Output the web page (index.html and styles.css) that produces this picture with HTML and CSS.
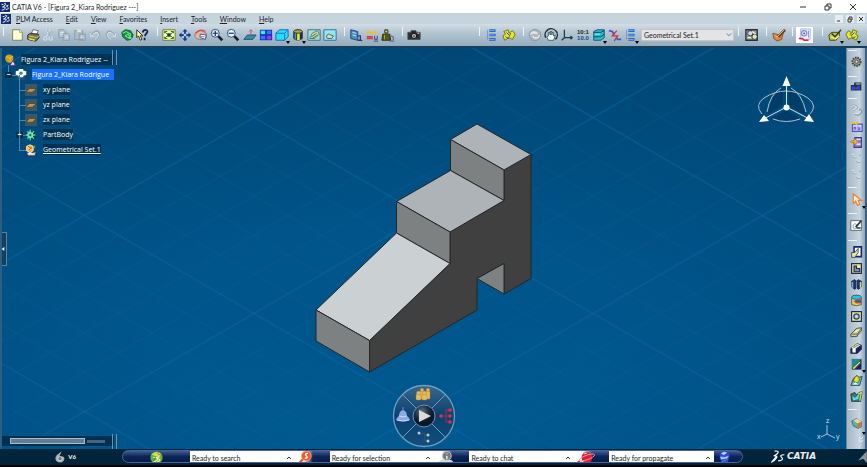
FILE: index.html
```html
<!DOCTYPE html>
<html lang="en">
<head>
<meta charset="utf-8">
<title>CATIA V6 - [Figura 2_Kiara Rodriguez ---]</title>
<link rel="stylesheet" href="styles.css">
</head>
<body>
<svg class="defs" aria-hidden="true">
  <symbol id="logo" viewBox="0 0 12 12"><path fill="#142f72" d="M0 0h12v12H0z"/><path d="M5 2q3-1 1 2L3 6h3q1 1-1 3L2 10M10 4q-4 0-1 2t-2 3M2 3h2" fill="none" stroke="#e8f0ff" stroke-width="1.2"/></symbol>
  <symbol id="page" viewBox="0 0 16 16"><path d="M3 2h8l3 3v9H3z" fill="#ffffd2" stroke="#77775a"/><path d="M11 2v3h3" fill="#fff" stroke="#99997a"/></symbol>
  <symbol id="printer" viewBox="0 0 16 16"><path d="M6 7l2-5 6 1-2 5z" fill="#fff" stroke="#333" stroke-width=".7"/><path d="M2 8l3-2 9 1 1 4-4 4-9-2z" fill="#77754a" stroke="#222"/><path d="M3 9l9 2 3-2" stroke="#ddda9a" fill="none"/><path d="M3 12l7 2" stroke="#f3e72b" stroke-width="1.5"/></symbol>
  <symbol id="cut" viewBox="0 0 16 16"><g fill="none" stroke="#d5dde3" stroke-width="1.4"><path d="M6 2l4 9M11 2L6 11"/><circle cx="5" cy="12" r="2"/><circle cx="11" cy="12" r="2"/></g><path d="M7 2l4 9M12 3l-5 8" stroke="#899aa6" fill="none" stroke-width=".7"/></symbol>
  <symbol id="copy" viewBox="0 0 16 16"><path d="M2 2h6l2 2v7H2z M7 6h5l2 2v6H7z" fill="#b5c5d0" stroke="#899aa6"/><path d="M4 5h4M4 7h3M9 9h3M9 11h4" stroke="#e8eff3"/></symbol>
  <symbol id="paste" viewBox="0 0 16 16"><path d="M2 3h9v10H2z M7 7h7v7H7z" fill="#b0bfc9" stroke="#8797a3"/><path d="M5 2h4v2H5zM9 9h3M9 11h3" fill="#ddd" stroke="#e2e8ec"/></symbol>
  <symbol id="undo" viewBox="0 0 16 16"><path d="M3 9q8-10 10-2 0 4-5 6M3 5v5h5" fill="none" stroke="#94a7b5" stroke-width="1.6"/><path d="M3 10q8-9 9-2 0 3-4 5M3 6v4h5" fill="none" stroke="#e3eaee"/></symbol>
  <symbol id="swirl" viewBox="0 0 16 16"><path d="M2 5l4-3 6 1 3 5-2 5-5 1-5-4z" fill="#138b43" stroke="#075b2b"/><path d="M3 6l4-2 5 3-1 5-5-3 3-2 4 5M10 10l4 4" fill="none" stroke="#7be48a" stroke-width="1.2"/></symbol>
  <symbol id="help" viewBox="0 0 16 16"><path d="M2 2v9l2-2 2 5 2-1-2-4h3z" fill="#fff68c" stroke="#222"/><path d="M9 5q0-3 3-3 3 1 2 3l-3 4M11 11v3" fill="none" stroke="#16214d" stroke-width="2"/></symbol>
  <symbol id="fit" viewBox="0 0 16 16"><path d="M1 2h14v12H1z" fill="#ffff98" stroke="#626f33"/><path d="M3 4l3 3M3 4h3M3 4v2M13 4l-3 3M13 4h-3M13 4v2M3 12l3-3M3 12h3M3 12v-2M13 12l-3-3M13 12h-3M13 12v-2" stroke="#05653a"/><path d="M6 6h4v4H6z" fill="#103c63"/></symbol>
  <symbol id="pan" viewBox="0 0 16 16"><path d="M8 1l3 3H9v3h3V5l3 3-3 3V9H9v3h2l-3 3-3-3h2V9H4v2L1 8l3-3v2h3V4H5z" fill="#123c8e"/><circle cx="8" cy="8" r="1.5" fill="#b9d4ee"/></symbol>
  <symbol id="rotate" viewBox="0 0 16 16"><path d="M1 8q1-5 7-5l6 3v5q-3 4-8 2-5-1-5-5z" fill="#eab7a6" stroke="#9b5a5d" stroke-width=".8"/><path d="M7 7l7 1-1 5-6-2z" fill="#fff" stroke="#2a4d8c"/><path d="M8 10h4" stroke="#3977c2"/><path d="M2 6q5-6 11-2" fill="none" stroke="#d4453f" stroke-width="1.5"/></symbol>
  <symbol id="zoomin" viewBox="0 0 16 16"><path d="M9 9l5 5" stroke="#171f35" stroke-width="3"/><circle cx="6" cy="6" r="4.5" fill="#d8faff" stroke="#283c65"/><path d="M3 6h6M6 3v6" stroke="#171f5b" stroke-width="1.3"/></symbol>
  <symbol id="zoomout" viewBox="0 0 16 16"><path d="M9 9l5 5" stroke="#171f35" stroke-width="3"/><circle cx="6" cy="6" r="4.5" fill="#d8faff" stroke="#283c65"/><path d="M3 6h6" stroke="#171f5b" stroke-width="1.3"/></symbol>
  <symbol id="normal" viewBox="0 0 16 16"><path d="M1 13l4-5h10l-4 5z" fill="#338fae" stroke="#144e6d"/><path d="M9 10V2M7 4l2-2 2 2" fill="none" stroke="#be4d5d"/></symbol>
  <symbol id="multi" viewBox="0 0 16 16"><path d="M1 2h14v12H1z" fill="#1431c7"/><path d="M2 3h5v4H2z" fill="#2cf2ef"/><path d="M9 3h5v4H9z" fill="#3676f3"/><path d="M2 9h5v4H2z" fill="#3775eb"/><path d="M9 9h5v4H9z" fill="#9a38da"/></symbol>
  <symbol id="cube" viewBox="0 0 16 16"><path d="M1 6l4-4h10v8l-4 4H1z" fill="#25dfff" stroke="#195cbb"/><path d="M1 6h10l4-4M11 6v8" fill="none" stroke="#1869d2"/></symbol>
  <symbol id="cylinder" viewBox="0 0 16 16"><path d="M3 4q5-4 10 0v8q-5 4-10 0z" fill="#172d52" stroke="#283f60"/><path d="M7 5h3v9H7z" fill="#f4e91c"/><ellipse cx="8" cy="4" rx="5" ry="2" fill="#a9ad3b" stroke="#333"/><path d="M4 6h2v7H4z" fill="#3f9999"/></symbol>
  <symbol id="hide" viewBox="0 0 16 16"><path d="M1 2h14v12H1z" fill="#a5ddd7" stroke="#3c6880"/><path d="M3 12l3-6 6-3 2 4-5 5z" fill="#d5df8f" stroke="#40757c"/><path d="M5 10l6-4M6 12l6-4" stroke="#1c6b78"/></symbol>
  <symbol id="swap" viewBox="0 0 16 16"><path d="M1 2h14v12H1z" fill="#8ee9f6" stroke="#3b6380"/><path d="M4 10q1-5 5-2l3 1-2 3H5z" fill="#e8d3b0" stroke="#296281"/></symbol>
  <symbol id="catalog" viewBox="0 0 16 16"><path d="M2 2l8 2v10l-8-2z" fill="#4692bc" stroke="#203c72"/><path d="M4 5l4 1M4 8l4 1" stroke="#b3f2ff"/><path d="M10 9h3v4l2 2M10 14h4" stroke="#3e3178" stroke-width="1.5" fill="none"/></symbol>
  <symbol id="measure" viewBox="0 0 16 16"><path d="M1 5l3-3v2h7V2l3 3-3 3V6H4v2z" fill="#f0bf24"/><path d="M2 10h7M2 12h7" stroke="#d93545" stroke-width="1.5"/><path d="M11 9v4h3V9M10 15h5" stroke="#432e78" fill="none"/></symbol>
  <symbol id="weight" viewBox="0 0 16 16"><circle cx="6" cy="4" r="2" fill="none" stroke="#55521f" stroke-width="1.5"/><path d="M2 7h8l1 7H1z" fill="#595719" stroke="#27270e"/><path d="M4 8v5" stroke="#b0a85a"/><path d="M11 9l3 1v4M10 15h5" stroke="#514782" fill="none"/></symbol>
  <symbol id="camera" viewBox="0 0 16 16"><path d="M1 5h3l1-2h5l1 2h4v8H1z" fill="#2b2d30" stroke="#4b4b48"/><circle cx="8" cy="9" r="3" fill="#b1b8b8" stroke="#000"/><circle cx="8" cy="9" r="1" fill="#444"/><path d="M12 6h2" stroke="#fff"/></symbol>
  <symbol id="stack" viewBox="0 0 16 16"><path d="M5 3h7M5 8h7M5 13h7" stroke="#3252c4" stroke-width="3"/><path d="M5 3h6M5 8h6M5 13h6" stroke="#56d9ee" stroke-width="1"/><path d="M3 2v11" stroke="#5a72a8" stroke-width=".7"/></symbol>
  <symbol id="clash" viewBox="0 0 16 16"><path d="M2 4l5-2 1 4 4-3 3 4-3 6-4-2-5 3-2-5 3-2z" fill="#ece623" stroke="#696c0d"/><path d="M5 5l3 3M10 6l-2 4M4 10l4 2" stroke="#253fce" stroke-width="1"/></symbol>
  <symbol id="refresh" viewBox="0 0 16 16"><circle cx="8" cy="8" r="6.5" fill="#adb7bd" stroke="#89949b"/><path d="M3 8q1-5 6-3l2 2M13 8q-1 5-6 3L5 9M5 6h5M6 11h5" fill="none" stroke="#e2e6e8" stroke-width="1.6"/></symbol>
  <symbol id="hand" viewBox="0 0 16 16"><path d="M2 11A7 7 0 1 1 13 13" fill="none" stroke="#232c32" stroke-width="1.6"/><path d="M5 14L3 10l2-1V5h2v3-4h2v4-3h2v4l2-1-2 6z" fill="#fff" stroke="#255e65"/></symbol>
  <symbol id="axis" viewBox="0 0 16 16"><path d="M5 2v9l-3 3M5 11h9M12 9l2 2-2 2" fill="none" stroke="#233443" stroke-width="1.4"/></symbol>
  <symbol id="body" viewBox="0 0 16 16"><path d="M2 4l4-2h8v9l-4 3H2z" fill="#25bfc4" stroke="#174a7a"/><path d="M2 5h8l4-2M2 10h8l4-3" fill="none" stroke="#073a66"/><path d="M3 7h6" stroke="#94fff1"/></symbol>
  <symbol id="connect" viewBox="0 0 16 16"><path d="M1 3l4 1 2 4M9 11l2 2h4" fill="none" stroke="#355bd1" stroke-width="2"/><path d="M10 3L5 9h6L7 15" fill="none" stroke="#d82e3e" stroke-width="1.5"/></symbol>
  <symbol id="find" viewBox="0 0 16 16"><path d="M1 2h13v12H1z" fill="#a3a07a" stroke="#242f4b" stroke-width="1.5"/><circle cx="6" cy="6" r="3" fill="#d1dbe3" stroke="#333"/><circle cx="11" cy="10" r="3" fill="#e8e4b2" stroke="#293247"/><path d="M3 11h4M8 4l4 3" stroke="#eee" stroke-width="1.5"/></symbol>
  <symbol id="brush" viewBox="0 0 16 16"><path d="M1 6l7 2 5-3-2 8-5 2-4-3z" fill="#d98543" stroke="#8a4a20"/><path d="M7 10l8-8" stroke="#6a3f23" stroke-width="3"/><path d="M6 10l8-8M3 8l4 3" stroke="#f9c488"/></symbol>
  <symbol id="gearpage" viewBox="0 0 16 16"><path d="M3 1h11v12H3z" fill="#e7ecff" stroke="#a7b1dd"/><circle cx="7" cy="6" r="3" fill="none" stroke="#7f8fc9" stroke-width="1.500"/><circle cx="7" cy="6" r="1" fill="#333c89"/><path d="M12 3v8" stroke="#7c8de0"/><path d="M1 12h4l2 2h5" fill="none" stroke="#dc2323" stroke-width="1.500"/></symbol>
  <symbol id="checkbox3d" viewBox="0 0 16 16"><path d="M1 8l3-3h9v5l-4 4H2z" fill="#c4c83a" stroke="#393d1b"/><path d="M3 10l6 2 4-3" fill="none" stroke="#f4f08f" stroke-width="1.5"/><path d="M4 6l4 4 7-8" fill="none" stroke="#2d3a26" stroke-width="1.5"/></symbol>
  <symbol id="pad" viewBox="0 0 16 16"><path d="M5 1h9v12H5z" fill="#fff" stroke="#172767" stroke-width="2"/><path d="M2 8h4l4-5v5l-4 6H2z" fill="#e9e69c" stroke="#303458"/></symbol>
  <symbol id="pocket" viewBox="0 0 16 16"><path d="M2 2h12v12H2z" fill="#eeeb91" stroke="#242a53" stroke-width="1.5"/><path d="M5 5h3v3h4v4H5z" fill="#7b93ad" stroke="#242a53" stroke-width="1.4"/></symbol>
  <symbol id="shaft" viewBox="0 0 16 16"><path d="M2 4l4-2 2 2 2-2 4 2v7l-4 3-2-3-2 3-4-3z" fill="#20326d" stroke="#192344"/><path d="M3 5v7" stroke="#7fb8b0" stroke-width="2"/><path d="M13 5v7" stroke="#e0dd74" stroke-width="2"/><path d="M8 4v9" stroke="#719aba"/></symbol>
  <symbol id="groove" viewBox="0 0 16 16"><path d="M2 4q6-5 12 0v9q-6 3-12 0z" fill="#eec849" stroke="#3b5668"/><ellipse cx="8" cy="4" rx="6" ry="2.5" fill="#28c4de" stroke="#326374"/><path d="M14 7H8q-5 2 0 4h6z" fill="#2868a2" stroke="#db4a31" stroke-width="1.2"/></symbol>
  <symbol id="hole" viewBox="0 0 16 16"><path d="M2 2h12v12H2z" fill="#f1ee91" stroke="#202753" stroke-width="1.4"/><circle cx="8" cy="8" r="3.3" fill="#adc5df" stroke="#313f77" stroke-width="1.5"/><path d="M7 8h2" stroke="#fff"/></symbol>
  <symbol id="rib" viewBox="0 0 16 16"><path d="M1 10l7-7 6-1v4l-6 7H1z" fill="#cccb91" stroke="#3a3e3e"/><path d="M2 10h7l5-7M9 10v3" fill="none" stroke="#555"/><path d="M5 8l5-4h2L7 8z" fill="#ffffa9"/></symbol>
  <symbol id="slot" viewBox="0 0 16 16"><path d="M1 8l8-6 5 2v5l-5 5H1z" fill="#18236c" stroke="#20263c"/><path d="M2 7l7-5 4 2-6 4v5H3V8z" fill="#fff"/><path d="M4 7l7-4" stroke="#a9aa56" stroke-width="2"/></symbol>
  <symbol id="stiff" viewBox="0 0 16 16"><path d="M2 1h12v13H2z" fill="#20898b"/><path d="M14 1v13H5z" fill="#16236a"/><path d="M3 12L13 3v3l-8 8H3z" fill="#e6e57b" stroke="#333"/></symbol>
  <symbol id="loft" viewBox="0 0 16 16"><path d="M1 14l3-8 4-4 3 2 4-1-3 11z" fill="#52b9c6" stroke="#273947"/><path d="M4 9q3-10 7-5 2 3-2 7z" fill="#e6e329" stroke="#555a15"/><path d="M3 13l4-3 3 3" fill="#fff"/></symbol>
  <symbol id="removed" viewBox="0 0 16 16"><path d="M1 5l5-2 2 3 3-3 4-1-2 12H2z" fill="#367876" stroke="#263338"/><path d="M3 7q3 5 6 0l3-3-2 7-6 2z" fill="#5fe2e2"/><path d="M10 5l4-2-2 10" fill="none" stroke="#dddf48" stroke-width="1.5"/></symbol>
  <symbol id="fillet" viewBox="0 0 16 16"><path d="M2 5l6-3 6 4v6l-4 2-6-3z" fill="#49b9a8" stroke="#5c5655"/><path d="M4 4l5-2 5 4-5 2z" fill="#ecd39b"/><path d="M9 8l5-2v6l-4 2z" fill="#cf7649"/></symbol>
  <symbol id="sketch" viewBox="0 0 16 16"><path d="M1 2h13v12H1z" fill="#fff" stroke="#46555d"/><path d="M4 11q-1-6 3-5 4 3-1 6z" fill="none" stroke="#46a68b"/><path d="M7 10l7-8M8 11h5" stroke="#29363c" stroke-width="2"/></symbol>
  <symbol id="pointer" viewBox="0 0 16 16"><path d="M4 1v12l3-3 2 5 3-1-2-5h4z" fill="#fff1df" stroke="#f5822b" stroke-width="1.5"/></symbol>
  <symbol id="gear" viewBox="0 0 16 16"><path d="M1 15l13-7v5z" fill="#9ad0b0"/><circle cx="8" cy="7" r="5" fill="#a0a39c" stroke="#40443e" stroke-width="2.5" stroke-dasharray="2 1"/><circle cx="8" cy="7" r="2" fill="#dee0d6" stroke="#333"/></symbol>
  <symbol id="machine" viewBox="0 0 16 16"><path d="M1 6h4V3h9v10H1z" fill="#272d40"/><path d="M2 8h4v4H2zM9 7h3v5H9z" fill="#2c4bf3"/><path d="M7 5h6M7 10h1" stroke="#d0d4d9" stroke-width="1.3"/></symbol>
  <symbol id="chain" viewBox="0 0 16 16"><path d="M2 3q4-2 6 1L4 7M6 12q6 3 8-3l-2-3" stroke="#8da0ad" stroke-width="3" fill="none"/><path d="M2 3q4-2 6 1L4 7M6 11q6 3 7-3" stroke="#e6ecef" fill="none" stroke-width="1.4"/></symbol>
  <symbol id="label" viewBox="0 0 16 16"><path d="M3 5h12v9H3z" fill="#ccd2ff" stroke="#4d50c8" stroke-width="1.4"/><path d="M1 3h6V1l4 3-4 3V5H1z" fill="#f4ba20"/><path d="M5 12V9h2v3M10 8v4h2V9" fill="none" stroke="#383caa"/></symbol>
  <symbol id="save" viewBox="0 0 16 16"><path d="M6 2h8v12H5V7z" fill="#8d84db" stroke="#363d91" stroke-width="1.4"/><path d="M8 4h5M8 10h5" stroke="#fff" stroke-width="1.5"/><path d="M1 6h4V3l5 4-5 4V8H1z" fill="#f4ba20" stroke="#c3622b" stroke-width=".7"/></symbol>
  <symbol id="ghost" viewBox="0 0 16 16"><path d="M2 4h3v3h3M8 11q2 3 5 1M12 3v2" fill="none" stroke="#94a8b5" stroke-width="1.500"/><path d="M2 3h3v3h3M8 10q2 3 5 1" fill="none" stroke="#e8eef1"/></symbol>
  <symbol id="product" viewBox="0 0 16 16"><circle cx="7" cy="6" r="5.5" fill="#cf9d18"/><path d="M3 3l5 2 4-2M8 5v6" stroke="#e7c747" fill="none"/><path d="M8 15l4-6 3 6z" fill="#f6f5ff" stroke="#68388b" stroke-width="1.2"/></symbol>
  <symbol id="part" viewBox="0 0 16 16"><path d="M2 9h12v6H2z" fill="#174e7a"/><path d="M1 3l4-1V0h6v2l4 1v5l-4 1v2H5V9L1 8z" fill="#fff"/><circle cx="8" cy="5.500" r="2.200" fill="#2686a6"/></symbol>
  <symbol id="plane" viewBox="0 0 16 16"><path d="M0 0h16v16H0z" fill="#3c5866"/><path d="M1 11l5-5h9l-5 5z" fill="#c0954a" stroke="#4d3f25"/></symbol>
  <symbol id="cog" viewBox="0 0 16 16"><circle cx="9" cy="9" r="6" fill="#063a57"/><path d="M7 1v14M1 8h13M3 3l9 10M12 3L3 13" stroke="#38d9a0" stroke-width="2"/><circle cx="7" cy="8" r="3.5" fill="#53d8b9" stroke="#b8ef8e"/><circle cx="7" cy="8" r="1.3" fill="#07566b"/></symbol>
  <symbol id="geoset" viewBox="0 0 16 16"><path d="M2 3q5-4 9 0v6q-4 4-9 0z" fill="#f5c454" stroke="#fff0ac"/><path d="M4 3l5 2-4 3" fill="none" stroke="#d04727" stroke-width="1.2"/><path d="M3 12l4-2 3 2 4-1-1 4H4z" fill="#eee" stroke="#b63d2b" stroke-width=".6"/><path d="M13 2v4" stroke="#6db5c9"/></symbol>
</svg>

<header class="titlebar">
  <svg class="mark"><use href="#logo"/></svg>
  <h1>CATIA V6 - [Figura 2_Kiara Rodriguez ---]</h1>
  <div class="window-controls">
    <button aria-label="Minimize"><svg viewBox="0 0 8 8"><path d="M1 4h6"/></svg></button>
    <button aria-label="Restore"><svg viewBox="0 0 8 8"><path d="M1 3h4v4H1zM3 3V1h4v4H5"/></svg></button>
    <button aria-label="Close"><svg viewBox="0 0 8 8"><path d="M1 1l6 6M7 1L1 7"/></svg></button>
  </div>
</header>
<nav class="menubar" aria-label="Main menu">
  <svg class="mark"><use href="#logo"/></svg>
  <button><u>P</u>LM Access</button><button><u>E</u>dit</button><button><u>V</u>iew</button><button><u>F</u>avorites</button><button><u>I</u>nsert</button><button><u>T</u>ools</button><button><u>W</u>indow</button><button><u>H</u>elp</button>
  <div class="doc-controls">
    <button aria-label="Minimize document"><svg viewBox="0 0 8 8"><path d="M2 6h3"/></svg></button>
    <button aria-label="Restore document"><svg viewBox="0 0 8 8"><path d="M2 4h3v3H2zM3 4V2h3v3H5"/></svg></button>
    <button aria-label="Close document"><svg viewBox="0 0 8 8"><path d="M2 2l4 4M6 2L2 6"/></svg></button>
  </div>
</nav>
<div class="toolbar" role="toolbar" aria-label="Standard tools">
  <div class="group standard">
    <button aria-label="New"><svg><use href="#page"/></svg></button><button aria-label="Print"><svg><use href="#printer"/></svg></button><button aria-label="Cut"><svg><use href="#cut"/></svg></button><button aria-label="Copy"><svg><use href="#copy"/></svg></button><button aria-label="Paste"><svg><use href="#paste"/></svg></button><button aria-label="Undo"><svg><use href="#undo"/></svg></button><button aria-label="Redo"><svg class="flip"><use href="#undo"/></svg></button><button aria-label="Update"><svg><use href="#swirl"/></svg></button><button aria-label="Help pointer"><svg><use href="#help"/></svg></button>
  </div>
  <div class="group">
    <button aria-label="Fit all"><svg><use href="#fit"/></svg></button><button aria-label="Pan"><svg><use href="#pan"/></svg></button><button aria-label="Rotate"><svg><use href="#rotate"/></svg></button><button aria-label="Zoom in"><svg><use href="#zoomin"/></svg></button><button aria-label="Zoom out"><svg><use href="#zoomout"/></svg></button><button aria-label="Normal view"><svg><use href="#normal"/></svg></button><button aria-label="Multi view"><svg><use href="#multi"/></svg></button><button class="more" aria-label="Isometric view"><svg><use href="#cube"/></svg></button><button class="more" aria-label="Shading"><svg><use href="#cylinder"/></svg></button><button aria-label="Hide or show"><svg><use href="#hide"/></svg></button><button aria-label="Swap space"><svg><use href="#swap"/></svg></button>
  </div>
  <div class="group">
    <button aria-label="Catalog"><svg><use href="#catalog"/></svg></button><button aria-label="Measure"><svg><use href="#measure"/></svg></button><button aria-label="Inertia"><svg><use href="#weight"/></svg></button>
  </div>
  <div class="group camera"><button aria-label="Capture"><svg><use href="#camera"/></svg></button></div>
  <div class="group">
    <button aria-label="Structure"><svg><use href="#stack"/></svg></button><button aria-label="Interference"><svg><use href="#clash"/></svg></button>
  </div>
  <div class="group sets">
    <button aria-label="Refresh"><svg><use href="#refresh"/></svg></button><button aria-label="Manual update"><svg><use href="#hand"/></svg></button><button aria-label="Axis system"><svg><use href="#axis"/></svg></button><button class="digits" aria-label="Mean dimensions">10:1<br><b>10.0</b></button><button class="more" aria-label="Insert body"><svg><use href="#body"/></svg></button><button aria-label="Connection"><svg><use href="#connect"/></svg></button><button class="more" aria-label="Sets"><svg><use href="#stack"/></svg></button>
    <div class="combo"><select aria-label="In work object"><option>Geometrical Set.1</option></select><svg viewBox="0 0 8 8" aria-hidden="true"><path d="M1 2l3 3 3-3"/></svg></div>
  </div>
  <div class="group one"><button aria-label="Find"><svg><use href="#find"/></svg></button></div>
  <div class="group one"><button aria-label="Material"><svg><use href="#brush"/></svg></button></div>
  <div class="group one pressed"><button aria-label="Properties"><svg><use href="#gearpage"/></svg></button></div>
  <div class="group"><button class="more" aria-label="Analysis"><svg><use href="#checkbox3d"/></svg></button><button class="more" aria-label="Knowledge"><svg class="flip"><use href="#clash"/></svg></button></div>
</div>

<main class="workspace">
  <section class="viewport" aria-label="Model">
    <svg class="scene" viewBox="0 0 844 402" preserveAspectRatio="xMidYMid slice" role="img" aria-label="Stepped part with a ramp">
      <defs>
        <linearGradient id="sky" x2="0" y2="1"><stop offset="0" stop-color="#004c7c"/><stop offset=".45" stop-color="#005489"/><stop offset="1" stop-color="#005990"/></linearGradient>
        <radialGradient id="edge" cx=".46" cy=".7" r=".66"><stop offset=".4" stop-color="#003c67" stop-opacity="0"/><stop offset="1" stop-color="#003c67" stop-opacity=".3"/></radialGradient>
        <pattern id="minor" x="252" y="70" width="67.8" height="39.2" patternUnits="userSpaceOnUse"><path d="M0 0l67.8 39.2M67.8 0L0 39.2" stroke="#0e649b" stroke-opacity=".35" stroke-width=".8"/></pattern>
        <pattern id="major" x="252" y="70" width="339" height="196" patternUnits="userSpaceOnUse"><path d="M0 0l339 196M339 0L0 196" stroke="#0567a5" stroke-opacity=".7"/></pattern>
      </defs>
      <path fill="url(#sky)" d="M0 0h844v402H0z"/><path fill="url(#edge)" d="M0 0h844v402H0z"/>
      <path fill="url(#minor)" d="M0 0h844v402H0z"/><path fill="url(#major)" d="M0 0h844v402H0z"/>
      <g transform="translate(-2 -48)" stroke="#242626" stroke-linejoin="round" stroke-width="1">
        <path fill="#404040" d="M504 170l27-15v124l-27 15.500V264l-27 15v31.500l-107.500 62V341l80.500-77v-32l54-31z"/>
        <path fill="#7d8182" d="M504 264v30.500L477 279z"/>
        <path fill="#adb3b6" d="M477 124.500l54 30.500-27 15.500-53.500-30.500z"/>
        <path fill="#7d8182" d="M450.500 140l53.500 30.500V201l-53.500-30z"/>
        <path fill="#adb3b6" d="M450.500 171l53.500 30-54 31.500-53.500-30.500z"/>
        <path fill="#7d8182" d="M396.500 202l53.500 30.500V264l-53.500-30.500z"/>
        <path fill="#cbd0d3" d="M396.500 233.500L450 264l-80.500 77L316 310.500z"/>
        <path fill="#7d8182" d="M316 310.500l53.500 30.500v31.500L316 341.500z"/>
      </g>
    </svg>

    <aside class="tree-panel" aria-label="Specification tree">
      <ul class="tree">
        <li class="root"><svg><use href="#product"/></svg><span>Figura 2_Kiara Rodriguez --</span></li>
        <li class="node selected"><i class="toggle">−</i><svg><use href="#part"/></svg><span>Figura 2_Kiara Rodrigue</span></li>
        <li class="leaf"><svg><use href="#plane"/></svg><span>xy plane</span></li>
        <li class="leaf"><svg><use href="#plane"/></svg><span>yz plane</span></li>
        <li class="leaf"><svg><use href="#plane"/></svg><span>zx plane</span></li>
        <li class="leaf"><i class="toggle">+</i><svg><use href="#cog"/></svg><span>PartBody</span></li>
        <li class="leaf last"><svg><use href="#geoset"/></svg><span>Geometrical Set.1</span></li>
      </ul>
      <div class="tree-scroll"><i class="thumb"></i><i class="track"></i></div>
    </aside>
    <button class="drawer" aria-label="Collapse tree"><svg viewBox="0 0 6 10"><path d="M5 2v6L1 5z"/></svg></button>

    <svg class="compass" viewBox="757 75 60 52" role="img" aria-label="Compass">
      <path d="M783 88q-11 5-15 26l15-9zM789 88q12 6 16 27l-16-10zM786 110l-13 8q14 7 27 0z" fill="#003c68"/>
      <g fill="none" stroke="#a9c0cf" stroke-width="1"><path d="M762 114q-8-9 2-16 11-7 22-7t22 7q10 8 2 16M767 112q3-18 14-24M806 112q-4-18-15-24M773 119q13 5 27 0"/></g>
      <path d="M786.500 85v22l-21 11M786.500 107l21 11" fill="none" stroke="#d8e4ec"/>
      <path d="M786.500 76l4 10h-8zM759 122l5-7 5 6zM814 122l-10-1 5-7z" fill="#fff"/><circle cx="786.500" cy="107.500" r="3" fill="#fff"/>
    </svg>

    <svg class="wheel" viewBox="-32 -32 64 64" role="img" aria-label="Robot navigator">
      <defs><radialGradient id="hub" cx=".4" cy=".3"><stop stop-color="#617789"/><stop offset=".6" stop-color="#1f3447"/><stop offset="1" stop-color="#06192c"/></radialGradient><linearGradient id="disc" x2="0" y2="1"><stop stop-color="#386789"/><stop offset=".5" stop-color="#0a4172"/><stop offset="1" stop-color="#124e7d"/></linearGradient></defs>
      <circle r="30.500" fill="url(#disc)" stroke="#6d9dc0" stroke-width="1.300"/>
      <path d="M-22-22L22 22M22-22L-22 22" stroke="#7198b8"/><circle r="11" fill="url(#hub)" stroke="#7392aa"/>
      <path d="M-5-6v12L7 0z" fill="#dcdcd5"/>
      <g fill="#e6bd5e" stroke="#a77c2d" stroke-width=".4"><rect x="-4" y="-25" width="4" height="8" rx="1"/><rect x="2" y="-25" width="4" height="8" rx="1"/><circle cx="-2" cy="-26" r="1.800"/><circle cx="4" cy="-26" r="1.800"/><rect x="-8" y="-22" width="5" height="6" rx="1"/><rect x="-2" y="-22" width="5" height="6" rx="1"/><circle cx="-5.500" cy="-23" r="2"/><circle cx=".5" cy="-23" r="2"/></g>
      <path d="M-28 4q1-3 3-4 0-5 4-6 4 1 4 6 2 1 3 4-7 3-14 0z" fill="#8fa9e4"/><path d="M-25 0q4 2 8 0M-27 4q6 2 12 0" fill="none" stroke="#dce6ff" stroke-width=".8"/><path d="M-21-9v3" stroke="#6b8edb"/>
      <g fill="#d33850" stroke="#c92b43" stroke-width=".8"><path d="M18 0h8M22-6h4M22 6h4M22-6V6" fill="none"/><circle cx="17" r="1.500"/><circle cx="26" cy="-6" r="1.500"/><circle cx="26" r="1.500"/><circle cx="26" cy="6" r="1.500"/></g>
      <path d="M-4 18h5v7h3M1 19h3" fill="none" stroke="#345872"/><g fill="#bdc6c9"><circle cx="-5" cy="17" r="1.500"/><circle cx="4" cy="19" r="1.500"/><circle cx="4" cy="25" r="1.500"/></g>
    </svg>

    <svg class="axes" viewBox="0 0 26 26" role="img" aria-label="Axis directions"><path d="M11 9v9l-6 3M11 18l8 4" fill="none" stroke="#abc0ce"/><text x="10" y="7">z</text><text x="1" y="23">x</text><text x="20" y="23">y</text></svg>
  </section>

  <div class="rail" role="toolbar" aria-label="Part design tools">
    <div class="stack s1"><button aria-label="Workbench"><svg><use href="#gear"/></svg></button></div>
    <div class="stack s1"><button aria-label="Simulation"><svg><use href="#machine"/></svg></button></div>
    <div class="stack s2"><button aria-label="Link"><svg><use href="#chain"/></svg></button><button aria-label="Rename"><svg><use href="#label"/></svg></button><button aria-label="Propagate"><svg><use href="#save"/></svg></button><button aria-label="Compare"><svg><use href="#ghost"/></svg></button><button aria-label="Merge"><svg><use href="#ghost"/></svg></button></div>
    <div class="stack s1"><button class="more" aria-label="Select"><svg><use href="#pointer"/></svg></button></div>
    <div class="stack s1"><button aria-label="Sketch"><svg><use href="#sketch"/></svg></button></div>
    <div class="stack s2"><button aria-label="Pad"><svg><use href="#pad"/></svg></button><button aria-label="Pocket"><svg><use href="#pocket"/></svg></button><button aria-label="Shaft"><svg><use href="#shaft"/></svg></button><button aria-label="Groove"><svg><use href="#groove"/></svg></button><button aria-label="Hole"><svg><use href="#hole"/></svg></button><button aria-label="Rib"><svg><use href="#rib"/></svg></button><button aria-label="Slot"><svg><use href="#slot"/></svg></button><button class="more" aria-label="Stiffener"><svg><use href="#stiff"/></svg></button><button aria-label="Multi-sections solid"><svg><use href="#loft"/></svg></button><button aria-label="Removed solid"><svg><use href="#removed"/></svg></button></div>
    <div class="stack s1"><button class="more" aria-label="Fillet"><svg><use href="#fillet"/></svg></button><button class="overflow" aria-label="More tools"><svg viewBox="0 0 8 8"><path d="M2 1l2 2 2-2M2 4l2 2 2-2"/></svg></button></div>
  </div>
</main>

<footer class="status">
  <div class="version"><svg viewBox="0 0 12 14"><path d="M8 0L2 5q-3 4 0 7 4 3 8 0 3-4-1-6L5 7z" fill="#aab0b0"/><circle cx="6" cy="9" r="2.500" fill="#707778" stroke="#dce0df"/></svg><b>V6</b></div>
  <div class="pill">
    <div class="cap"><svg class="orb" viewBox="0 0 16 16"><circle cx="8" cy="8" r="7.500" fill="#69b52d"/><path d="M2 4q6-5 11 0l-3 4z" fill="#c5e45c"/><path d="M4 8h4q3 3-2 5H4M8 4q5-2 3 2M12 7q-4 1-1 3t-2 3" fill="none" stroke="#fff6ae" stroke-width="1.400"/><path d="M7 7l-3 6" stroke="#2b7abf"/><path d="M9 3l3 2" stroke="#dd5538" stroke-width="1.500"/></svg></div>
    <button class="field">Ready to search<svg viewBox="0 0 8 8"><path d="M2 5l2-2 2 2"/></svg></button>
    <div class="seg"><svg class="orb" viewBox="0 0 16 16"><path d="M7 8l-6 6" stroke="#e95923" stroke-width="3"/><circle cx="9" cy="6" r="6" fill="#ee5c2d" stroke="#ffa477"/><path d="M11 3q-5 0-2 3t-2 3" fill="none" stroke="#fff" stroke-width="1.500"/></svg></div>
    <button class="field">Ready for selection<svg viewBox="0 0 8 8"><path d="M2 5l2-2 2 2"/></svg></button>
    <div class="seg"><svg class="orb wide" viewBox="0 0 18 16"><path d="M0 13q6-4 9-2 8-1 9 3-9 3-18-1z" fill="#d6d9da"/><circle cx="10" cy="6" r="5.500" fill="#777e82" stroke="#cbd0d1"/><path d="M10 3v1M10 6v4" stroke="#fff" stroke-width="1.500"/></svg></div>
    <button class="field">Ready to chat<svg viewBox="0 0 8 8"><path d="M2 5l2-2 2 2"/></svg></button>
    <div class="seg"><svg class="orb wide" viewBox="0 0 20 14"><circle cx="11" cy="7" r="6" fill="#e21e36"/><ellipse cx="11" cy="7" rx="9" ry="2.500" transform="rotate(-20 11 7)" fill="none" stroke="#f09aa2" stroke-width="1"/><circle cx="2" cy="12" r="1.500" fill="#e21e36"/><path d="M8 3l3-1" stroke="#fff"/></svg></div>
    <button class="field">Ready for propagate<svg viewBox="0 0 8 8"><path d="M2 5l2-2 2 2"/></svg></button>
    <div class="end"><svg class="orb" viewBox="0 0 16 16"><path d="M2 2q6-4 11 0l1 5-2 7q-5 3-8 0L2 8z" fill="#2649d8"/><path d="M4 3q4-3 7-1l-4 3zM3 7q5 2 10-1l-2 3-7 1zM5 13l7-3" fill="#cddcff" stroke="#8fb0ff" stroke-width=".6"/></svg></div>
  </div>
  <div class="brand"><svg viewBox="0 0 18 14"><path d="M4 1q6-1 3 3L4 6M3 6q5 0 3 3-2 3-5 4l5-6M15 5q-6 0-3 3t-4 4" fill="none" stroke="#fff" stroke-width="1.300"/></svg><strong>CATIA</strong><svg class="corner" viewBox="0 0 10 14"><path d="M10 0v14L6 9 0 11z" fill="#8b9498"/></svg></div>
</footer>
</body>
</html>
```
FILE: styles.css
```css
* { box-sizing: border-box; }
html, body { height: 100%; }
body {
  margin: 0;
  display: flex;
  flex-direction: column;
  overflow: hidden;
  background: #00253a;
  color: #20242a;
  font: 7px/10px Lato, "Open Sans", sans-serif;
}
button {
  margin: 0;
  padding: 0;
  border: 0;
  background: none;
  color: inherit;
  font: inherit;
}
svg { display: block; flex: none; }
.defs { position: absolute; width: 0; height: 0; }

.titlebar, .menubar { display: flex; align-items: center; flex: none; }
.titlebar { height: 13px; background: #fff; }
.titlebar h1 { margin: 0 0 0 2px; font: inherit; }
.mark { width: 10px; height: 10px; }
.window-controls, .doc-controls { display: flex; margin-left: auto; }
.window-controls { gap: 17px; padding-right: 10px; }
.window-controls svg, .doc-controls svg { width: 8px; height: 8px; fill: none; stroke: #333; stroke-width: 1; }
.menubar { height: 11px; background: #c6d4de; }
.menubar .mark { width: 12px; margin-right: 4px; }
.menubar > button { margin-right: 13px; }
.doc-controls { gap: 3px; padding-right: 2px; }
.doc-controls button { background: #e6edf2; }

.toolbar {
  display: grid;
  grid-template-columns: 154fr 187fr 58fr 77fr 44fr 215fr 28fr 26fr 30fr 45fr;
  flex: none;
  height: 24px;
  padding: 0 0 0 3px;
  border-bottom: 2px solid #16405f;
  background: linear-gradient(#d2dde5, #b3c5d2 40%, #94abbb);
}
.group { position: relative; display: flex; align-items: center; padding: 0 6px 0 4px; }
.group::before {
  content: "";
  position: absolute;
  left: 0;
  top: 3px;
  width: 1px;
  height: 9px;
  background: #eef3f6;
}
.group button { position: relative; flex: 1; display: flex; justify-content: center; }
.group svg { width: 14px; height: 14px; }
.group.standard { padding: 0 7px 0 6px; }
.group.camera button { flex: none; width: 16px; }
.group.one { padding: 0 4px; }
.pressed button { max-width: 17px; padding: 1px 0; background: #fff; }
.flip { transform: scaleX(-1); }
.more::after {
  content: "";
  position: absolute;
  right: 0;
  bottom: -2px;
  border: 2px solid transparent;
  border-top: 3px solid #000;
  border-bottom: 0;
}
.group .digits { display: block; text-align: center; font: bold 6px/6px "Liberation Sans", sans-serif; }
.digits b { color: #294993; }
.group.sets { padding: 0 4px; }
.combo { position: relative; flex: 0 0 45%; margin-left: 2px; }
.combo select {
  display: block;
  width: 100%;
  height: 12px;
  padding: 0 2px;
  border: 1px solid #c1c7ca;
  border-radius: 0;
  appearance: none;
  background: #e2e4e5;
  color: #222;
  font: inherit;
}
.combo svg { position: absolute; right: 2px; top: 3px; width: 6px; height: 6px; fill: none; stroke: #555; }

.workspace { display: flex; flex: 1; min-height: 0; }
.viewport { position: relative; flex: 1; min-width: 0; overflow: hidden; border-left: 2px solid #2c6082; background: #005489; }
.scene { position: absolute; inset: 0; width: 100%; height: 100%; }

.tree-panel {
  position: absolute;
  inset: 4px auto 0 0;
  width: 115px;
  display: flex;
  flex-direction: column;
  justify-content: space-between;
  color: #fff;
  font: 7px/11px "Open Sans", sans-serif;
}
.tree-panel::before, .tree-panel::after {
  content: "";
  position: absolute;
  right: 0;
  top: -2px;
  width: 3px;
  height: 15px;
  border: solid #6e93aa;
  border-width: 0 1px;
}
.tree-panel::before { top: auto; bottom: 0; }
.tree { margin: 0; padding: 0 3px 0 0; list-style: none; overflow: hidden; }
.tree li { position: relative; display: flex; align-items: center; gap: 6px; height: 15px; white-space: nowrap; }
.tree svg { width: 12px; height: 12px; }
.tree span { background: #003353; }
.tree .root { gap: 5px; padding-left: 2px; }
.root span, .selected span { flex: 1; }
.tree .node { gap: 5px; padding-left: 13px; }
.tree .leaf { padding-left: 23px; }
.tree .selected span { background: #1770ff; }
.leaf::before {
  content: "";
  position: absolute;
  left: 17px;
  top: -7px;
  width: 6px;
  height: 15px;
  border: solid #5884a0;
  border-width: 0 0 1px 1px;
}
.node::before { content: ""; position: absolute; left: 6px; top: -2px; width: 7px; height: 10px; border: solid #5884a0; border-width: 0 0 1px 1px; }
.last span { text-decoration: underline; }
.toggle {
  position: absolute;
  left: 3px;
  top: 5px;
  width: 7px;
  height: 6px;
  border-radius: 1px;
  background: #052e49;
  font: bold 7px/6px "Liberation Sans", sans-serif;
  text-align: center;
}
.leaf .toggle { left: 14px; }
.tree-scroll { display: flex; align-items: center; gap: 2px; height: 10px; margin: 0 3px 3px 0; padding: 0 9px 0 8px; background: #00304f; }
.thumb { flex: 4; height: 6px; border: 1px solid #a9bdca; background: #607e93; }
.track { flex: 1; height: 3px; background: #43657d; }
.drawer { position: absolute; left: -1px; top: 184px; width: 6px; height: 34px; border: 1px solid #5882a0; border-left: 0; background: #123f60; }
.drawer svg { width: 4px; height: 8px; fill: #fff; }
.compass { position: absolute; right: 29px; top: 27px; width: 60px; height: 52px; }
.wheel { position: absolute; left: 50%; bottom: 1px; width: 64px; height: 64px; transform: translateX(-32px); }
.axes { position: absolute; right: 4px; bottom: 7px; width: 26px; height: 26px; }
.axes text { fill: #d5e2eb; font: 7px "Open Sans", sans-serif; }

.rail {
  display: grid;
  grid-template-rows: 26fr 22fr 89fr 26fr 27fr 169fr 40fr;
  flex: none;
  width: 21px;
  padding-top: 2px;
  border-right: 2px solid #405e7b;
  border-left: 1px solid #6f8798;
  background: linear-gradient(90deg, #a2b6c5, #c7d6e0 70%, #8ea5b6);
}
.stack { position: relative; display: flex; flex-direction: column; min-height: 0; }
.stack::before { content: ""; position: absolute; left: 1px; top: 0; width: 9px; height: 1px; background: #edf2f5; }
.stack button { position: relative; flex: 1; display: flex; align-items: center; justify-content: center; min-height: 0; }
.stack svg { width: 13px; height: 13px; }
.stack .more::after { right: -1px; bottom: 0; }
.s1 { padding: 2px 0 4px; }
.s2 { padding: 4px 0; }
.stack .overflow { flex: none; height: 10px; justify-content: flex-end; }
.stack .overflow svg { width: 8px; height: 8px; fill: none; stroke: #e9f0f5; }

.status {
  display: grid;
  grid-template-columns: 122fr 621fr 124fr;
  flex: none;
  height: 18px;
  padding: 1px 0 2px;
  border-bottom: 2px solid #000;
  background: #00253a;
  color: #fff;
}
.version { display: flex; align-items: center; justify-content: flex-end; gap: 3px; padding-right: 46px; font-size: 6px; }
.version svg { width: 10px; height: 12px; }
.pill {
  display: grid;
  grid-template-columns: 67fr 105fr 35fr 105fr 35fr 105fr 35fr 105fr 28fr;
  overflow: hidden;
  border: 1px solid #4a6294;
  border-radius: 8px;
  background: linear-gradient(#405e91, #0c2558 50%, #071c4b);
}
.field { display: flex; align-items: center; justify-content: space-between; padding: 0 2px; background: #fff; color: #20242a; text-align: left; white-space: nowrap; }
.field svg { width: 8px; height: 8px; fill: none; stroke: #173769; stroke-width: 1; }
.cap, .seg, .end { display: flex; align-items: center; justify-content: center; }
.seg { justify-content: flex-start; background: linear-gradient(90deg, #fff 8px, transparent 18px); }
.orb { width: 15px; height: 13px; }
.seg .orb { margin-left: 3px; }
.orb.wide { width: 18px; }
.end { justify-content: flex-start; padding-left: 3px; }
.brand { display: flex; align-items: center; padding-left: 28px; color: #e9eef0; }
.brand svg { width: 16px; height: 13px; }
.brand strong { font: italic bold 9px/13px "DejaVu Sans", sans-serif; }
.brand .corner { width: 9px; height: 12px; margin-left: auto; }
```
